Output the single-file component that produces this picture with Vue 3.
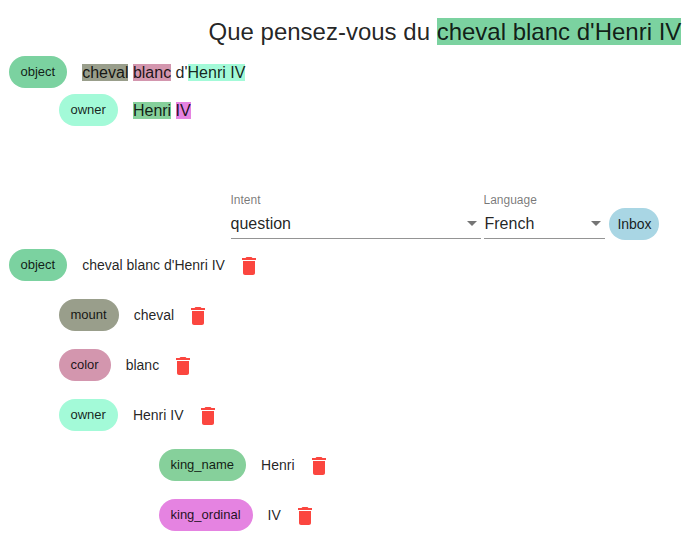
<script setup>
const preview = [
  {
    label: 'object',
    color: '#7bd2a0',
    level: 0,
    parts: [
      { text: 'cheval', color: '#999e8b' },
      { text: ' ' },
      { text: 'blanc', color: '#d396ae' },
      { text: " d'" },
      { text: 'Henri IV', color: '#a3fad8' },
    ],
  },
  {
    label: 'owner',
    color: '#a3fad8',
    level: 1,
    parts: [
      { text: 'Henri', color: '#86d09b' },
      { text: ' ' },
      { text: 'IV', color: '#e583e1' },
    ],
  },
]

const entities = [
  { label: 'object', value: "cheval blanc d'Henri IV", color: '#7bd2a0', level: 0 },
  { label: 'mount', value: 'cheval', color: '#999e8b', level: 1 },
  { label: 'color', value: 'blanc', color: '#d396ae', level: 1 },
  { label: 'owner', value: 'Henri IV', color: '#a3fad8', level: 1 },
  { label: 'king_name', value: 'Henri', color: '#86d09b', level: 3 },
  { label: 'king_ordinal', value: 'IV', color: '#e583e1', level: 3 },
]
</script>

<template>
  <main class="page">
    <h1 class="headline">Que pensez-vous du <mark class="subject">cheval blanc d'Henri IV</mark></h1>

    <section class="preview">
      <div v-for="row in preview" :key="row.label" class="preview-row" :style="{ marginLeft: row.level * 50 + 'px' }">
        <span class="chip" :style="{ background: row.color }">{{ row.label }}</span>
        <span class="sentence"><span v-for="(part, i) in row.parts" :key="i" :style="{ background: part.color }">{{ part.text }}</span></span>
      </div>
    </section>

    <section class="controls">
      <div class="field intent">
        <span class="label">Intent</span>
        <div class="select"><span>question</span><i class="arrow"></i></div>
      </div>
      <div class="field language">
        <span class="label">Language</span>
        <div class="select"><span>French</span><i class="arrow"></i></div>
      </div>
      <button class="inbox">Inbox</button>
    </section>

    <section class="entities">
      <div v-for="row in entities" :key="row.label" class="entity" :style="{ marginLeft: row.level * 50 + 'px' }">
        <span class="chip" :style="{ background: row.color }">{{ row.label }}</span>
        <span class="value">{{ row.value }}</span>
        <svg class="trash" viewBox="0 0 24 24"><path d="M6 19c0 1.1.9 2 2 2h8c1.1 0 2-.9 2-2V7H6v12zM19 4h-3.500l-1-1h-5l-1 1H5v2h14V4z" /></svg>
      </div>
    </section>
  </main>
</template>

<style>
body {
  background: #fff;
  overflow: hidden;
}
</style>

<style scoped>
.page {
  box-sizing: border-box;
  width: 682px;
  height: 547px;
  overflow: hidden;
  font-family: "Liberation Sans", Arial, sans-serif;
  color: rgba(0, 0, 0, 0.87);
}
.headline {
  margin: 0;
  padding: 16px 0 8px 208.500px;
  font-size: 24px;
  line-height: 32px;
  font-weight: 400;
  white-space: nowrap;
}
.subject {
  background: #7bd2a0;
  color: inherit;
}
.preview {
  display: flex;
  flex-direction: column;
  gap: 6px;
  height: 137px;
  padding-left: 8.500px;
}
.preview-row {
  display: flex;
  align-items: center;
  height: 32px;
}
.chip {
  box-sizing: border-box;
  height: 32px;
  padding: 0 12px;
  border-radius: 16px;
  font-size: 13px;
  line-height: 32px;
  white-space: nowrap;
}
.sentence {
  margin: 2px 0 0 15px;
  font-size: 16px;
  white-space: pre;
}
.controls {
  display: flex;
  align-items: flex-end;
  height: 47px;
  padding-left: 230.500px;
}
.field {
  box-sizing: border-box;
  height: 46px;
  margin-bottom: 1px;
  border-bottom: 1px solid #949494;
}
.intent {
  width: 250px;
}
.language {
  width: 121px;
  margin-left: 3px;
}
.language .select {
  padding-left: 1px;
}
.label {
  display: block;
  font-size: 12px;
  line-height: 14px;
  color: rgba(0, 0, 0, 0.54);
}
.select {
  display: flex;
  align-items: center;
  justify-content: space-between;
  height: 33px;
  padding-right: 4px;
  font-size: 16px;
  line-height: 20px;
}
.arrow {
  border: 5px solid transparent;
  border-top-color: #757575;
  border-bottom: 0;
}
.inbox {
  height: 32px;
  width: 50px;
  margin-left: 4.500px;
  padding: 0 0 0 1px;
  border: 0;
  border-radius: 16px;
  background: #a9d6e4;
  font: 14px "Liberation Sans", Arial, sans-serif;
  color: rgba(0, 0, 0, 0.87);
}
.entities {
  display: flex;
  flex-direction: column;
  gap: 18px;
  padding: 9px 0 0 8.500px;
}
.entity {
  display: flex;
  align-items: center;
  height: 32px;
}
.value {
  margin-left: 15px;
  font-size: 14px;
}
.trash {
  width: 24px;
  height: 24px;
  margin: 2px 0 0 12px;
  fill: #fb463f;
}
</style>
